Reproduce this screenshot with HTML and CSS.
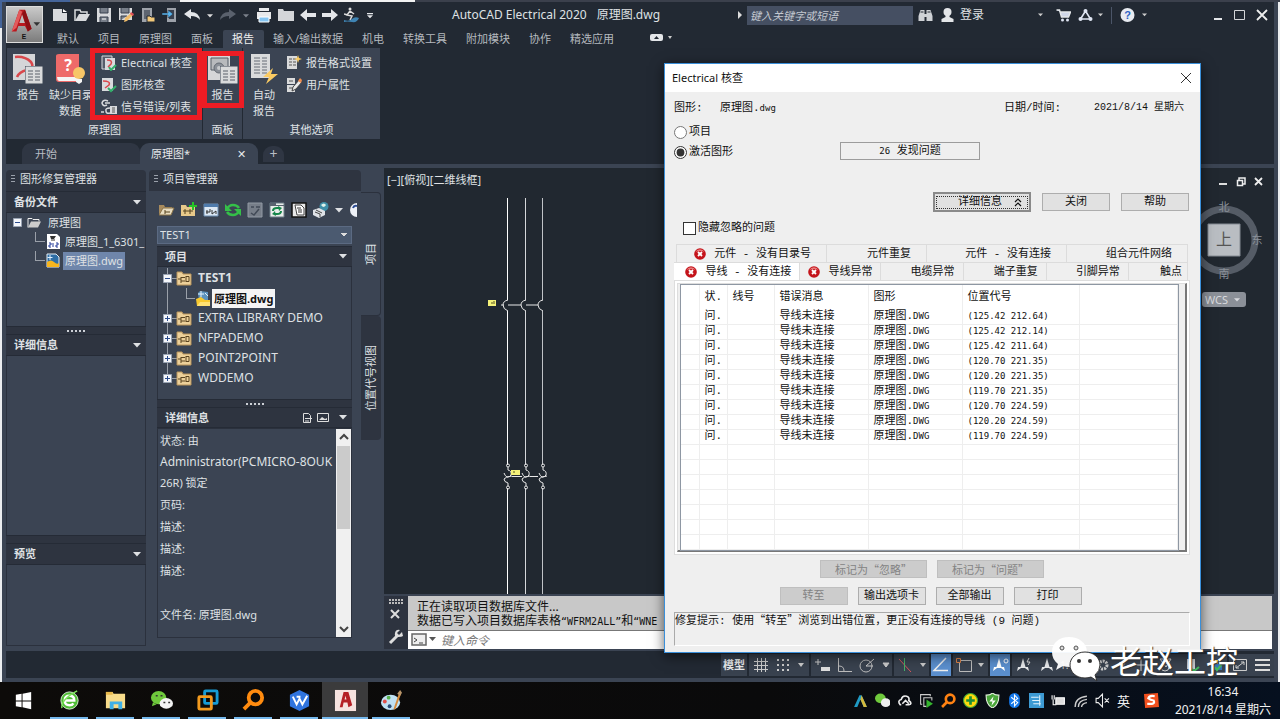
FILE: index.html
```html
<!DOCTYPE html>
<html lang="zh-CN">
<head>
<meta charset="utf-8">
<title>AutoCAD Electrical 2020 - 原理图.dwg</title>
<link rel="stylesheet" href="styles.css">
</head>
<body>
<svg class="defs" aria-hidden="true">
  <symbol id="folder" viewBox="0 0 16 15"><path d="M1 1h5l1 2h8v11H1z" fill="#ecd09a" stroke="#b8935a"/><path d="M2 8h3M5 6v6M5 6.500h4M5 10h4M10 5v6M10 5.500h3v5h-3" stroke="#5b4420" fill="none"/></symbol>
  <symbol id="plus" viewBox="0 0 9 9"><path d="M.5.5h8v8h-8z" fill="#f4f6fa" stroke="#9aa4b4"/><path d="M2 4.500h5M4.500 2v5" stroke="#2c4c8c"/></symbol>
  <symbol id="minus" viewBox="0 0 9 9"><path d="M.5.5h8v8h-8z" fill="#f4f6fa" stroke="#9aa4b4"/><path d="M2 4.500h5" stroke="#2c4c8c"/></symbol>
  <symbol id="dwg" viewBox="0 0 14 15"><path d="M1 1h9l3 3v10H1z" fill="#2e6ea6" stroke="#e5edf5"/><path d="M1 9q4-3 7 0t5 1v4H1z" fill="#f6b51e"/><path d="M4 2v5M1.500 4.500h5" stroke="#dff0ff"/></symbol>
  <symbol id="dwg2" viewBox="0 0 14 15"><path d="M2 2l2-2 8 1v9H3z" fill="#5d93bd"/><path d="M5 0v6M2 3h6M9 2l3 3" stroke="#e5f2fb"/><path d="M0 8l5-2 4 3h5v6H1z" fill="#f8c92e"/><path d="M1 15l3-4h10v4z" fill="#ffe173"/></symbol>
  <symbol id="caret" viewBox="0 0 8 5"><path d="M0 0h8L4 4.500z" fill="currentColor"/></symbol>
  <symbol id="err" viewBox="0 0 12 12"><circle cx="6" cy="6" r="5.800" fill="#c4131a"/><path d="M1.500 4a5 5 0 0 1 9 0q-4-2-9 0" fill="#e87a7a"/><path d="M4 4l4 4M8 4l-4 4" stroke="#fff" stroke-width="1.800"/></symbol>
  <symbol id="sheet" viewBox="0 0 30 32"><path d="M0 1h22v26H0z" fill="#d5d6d8"/></symbol>
  <symbol id="list" viewBox="0 0 18 18"><path d="M0 0h18v18H0z" fill="#dadbdc" stroke="#3b4453"/><path d="M3 5h5M10 5h5M3 8h5M10 8h5M3 11h5M10 11h5M3 14h5M10 14h5" stroke="#5a606a"/></symbol>
  <symbol id="person" viewBox="0 0 16 16"><path d="M8 1L5.500 10H3l-1 4 4-3h4l4 3-1-4h-2.500z" fill="currentColor"/></symbol>
</svg>

<div class="desktop">
<div class="app">
  <header class="header">
    <button class="logo" aria-label="应用程序菜单">
      <svg viewBox="0 0 37 37"><path d="M5 26L13 3h6l7 20-4 3-3-6h-7l-2 6z" fill="#b9191f"/><path d="M13 3l3 2-6 17-5 4z" fill="#e25a5c"/><path d="M16 8l3 9h-6z" fill="#bfbfbf"/><path d="M19 3l7 20-4 3-6-19z" fill="#8c1015"/><path d="M28 16h7l-3.500 4z" fill="#333"/><text x="18" y="34" class="logo-e">E</text></svg>
    </button>
    <div class="header-main">
      <div class="titlebar">
        <div class="quick">
          <svg class="q" viewBox="0 0 16 16"><path d="M1 2h9v4h5v8H1z" fill="#d8dadd"/><path d="M11 2l4 3h-4z" fill="#fff"/></svg>
          <svg class="q" viewBox="0 0 16 16"><path d="M1 14V3h5l1 2h6v2" fill="none" stroke="#d8dadd" stroke-width="1.500"/><path d="M1 14L5 7h11l-4 7z" fill="#d8dadd"/></svg>
          <svg class="q" viewBox="0 0 16 16"><path d="M1 1h14v14H1z" fill="#d8dadd"/><path d="M4 1v5h8V1M4 15v-5h8v5" fill="#777e89" stroke="#39414f"/><path d="M6 12h4" stroke="#fff"/></svg>
          <svg class="q" viewBox="0 0 16 16"><path d="M1 1h13v12H1z" fill="#d8dadd"/><path d="M3 1v5h8V1M3 13v-4h6" fill="#777e89" stroke="#39414f"/><path d="M6 15l1-4 6-5 2 2-6 6z" fill="#f1bd6a"/><path d="M12 7l1-2 3 2-1 2z" fill="#e0505a"/></svg>
          <svg class="q" viewBox="0 0 16 16"><path d="M2 1h10v14H2z" fill="#9da2aa"/><path d="M4 3h6v9H4z" fill="#5d6470"/><path d="M7 9h3l1 1h4v5H7z" fill="#f2c879" stroke="#222933"/></svg>
          <svg class="q" viewBox="0 0 16 16"><path d="M5 1h9v14H5z" fill="#9da2aa"/><path d="M7 3h5v9H7z" fill="#39414f"/><path d="M0 6h6V3l5 4-5 4V8H0z" fill="#58b4ee" stroke="#222933" stroke-width=".5"/></svg>
          <svg class="q" viewBox="0 0 16 16"><path d="M0 7l7-5v3q8 0 9 8-3-4-9-4v3z" fill="#e4e6e9"/></svg>
          <svg class="q-caret"><use href="#caret"/></svg>
          <svg class="q" viewBox="0 0 16 16"><path d="M16 7L9 2v3Q1 5 0 13q3-4 9-4v3z" fill="#5a616d"/></svg>
          <svg class="q-caret dim"><use href="#caret"/></svg>
          <svg class="q" viewBox="0 0 16 16"><path d="M3 1h10v3H3zM1 5h14v7H1z" fill="#e8e9eb"/><path d="M3 10h10v5H3z" fill="#86c5f2" stroke="#fff"/></svg>
          <svg class="q" viewBox="0 0 16 16"><path d="M0 2h5l1 2h10v10H0z" fill="#d4d6d9"/></svg>
          <svg class="q" viewBox="0 0 16 16"><path d="M0 8l7-6v4h9v4H7v4z" fill="#e4e6e9"/></svg>
          <svg class="q" viewBox="0 0 16 16"><path d="M16 8L9 2v4H0v4h9v4z" fill="#e4e6e9"/></svg>
          <svg class="q" viewBox="0 0 16 16"><circle cx="6" cy="2" r="1.500" fill="#ddd"/><path d="M6 4L3 8l5 1-2 4M6 4l4 3M0 7l4 1" stroke="#ddd" stroke-width="1.500" fill="none"/><path d="M0 13q5 2 8-1t7-1q-2 5-7 4t-8 0z" fill="#3f84b4"/></svg>
          <svg class="q-caret" viewBox="0 0 8 8"><path d="M0 0h8v1.500H0zM0 3h8L4 7z" fill="#e4e6e9"/></svg>
        </div>
        <h1 class="title">AutoCAD Electrical 2020<span class="title-file">原理图.dwg</span></h1>
        <div class="account">
          <svg class="tri-r" viewBox="0 0 4 8"><path d="M0 0l4 4-4 4z" fill="#ddd"/></svg>
          <input class="search" type="text" placeholder="键入关键字或短语" aria-label="搜索">
          <svg class="a14" viewBox="0 0 14 14"><path d="M2 2h4v11H0V8zM8 2h4l2 6v5H8zM6 6h2v3H6z" fill="#cfd2d6"/><path d="M2 4h3M9 4h3" stroke="#222933"/></svg>
          <svg class="a14 user-icon" viewBox="0 0 14 14"><circle cx="7" cy="4" r="4" fill="#e4e6e9"/><path d="M5 6h4v3l4 2v3H1v-3l4-2z" fill="#e4e6e9"/></svg>
          <a class="login" href="#">登录</a>
          <svg class="caret-s"><use href="#caret"/></svg>
          <svg class="a14 cart" viewBox="0 0 14 14"><path d="M0 2h3l2 7h7l2-5H4" fill="#cfd6e8" stroke="#e4e6e9" stroke-width="1.500"/><circle cx="6" cy="12" r="1.500" fill="#dfe5f3"/><circle cx="11" cy="12" r="1.500" fill="#dfe5f3"/></svg>
          <svg class="a14 cloud" viewBox="0 0 14 14"><path d="M7 3L2 11h10z" fill="none" stroke="#dfe5f3" stroke-width="1.600"/><circle cx="7" cy="3" r="2" fill="#dfe5f3"/><circle cx="2" cy="11" r="2" fill="#dfe5f3"/><circle cx="12" cy="11" r="2" fill="#dfe5f3"/></svg>
          <svg class="caret-s near"><use href="#caret"/></svg>
          <span class="sep"></span>
          <svg class="a14" viewBox="0 0 14 14"><circle cx="7" cy="7" r="7" fill="#e8ebf1"/><text x="7" y="11" class="help-q">?</text></svg>
          <svg class="caret-s help-caret"><use href="#caret"/></svg>
          <svg class="winbtns" viewBox="0 0 58 14"><path d="M0 11h8" stroke="#e4e6e9" stroke-width="2"/><path d="M20.500 2.500h10v9h-10z" fill="none" stroke="#d4d6d9"/><path d="M43 2l10 10M53 2L43 12" stroke="#eee" stroke-width="1.800"/></svg>
        </div>
      </div>
      <nav class="tabs">
        <button>默认</button><button>项目</button><button>原理图</button><button>面板</button><button class="on">报告</button><button>输入/输出数据</button><button>机电</button><button>转换工具</button><button>附加模块</button><button>协作</button><button>精选应用</button>
        <svg class="tabs-extra" viewBox="0 0 24 8"><rect width="13" height="7" rx="2" fill="#e4e6e9"/><path d="M4 5h5L6.500 2z" fill="#222933"/><path d="M18 2h4l-2 3z" fill="#ccc"/></svg>
      </nav>
    </div>
  </header>

  <section class="ribbon">
    <div class="rpanel rp1">
      <div class="rbody">
        <button class="big"><svg viewBox="0 0 30 32"><use href="#sheet"/><path d="M2 4q10-1 16 5 4 6-4 8-8 2-10 7" fill="none" stroke="#d9484c" stroke-width="2.500"/><use href="#list" x="12" y="13" width="18" height="18"/></svg>报告</button>
        <button class="big"><svg viewBox="0 0 30 32"><path d="M1 3q0-2 3-2h20v28H4q-3 0-3-3z" fill="#ee6a69"/><path d="M2 24h22v4H4q-2-1-2-4z" fill="#f5f5f5"/><text x="13" y="18" class="book-q">?</text><circle cx="24" cy="20" r="6" fill="#f7c667"/><path d="M21 26h6v3l-3 2-3-2z" fill="#f5f5f5"/></svg>缺少目录<br>数据</button>
        <div class="small-col">
          <button><svg viewBox="0 0 16 16"><path d="M1 1h10v13H1z" fill="#555d6a" stroke="#d8dadd"/><path d="M4 3h10v12H4z" fill="#d8dadd"/><path d="M6 5q6 0 4 4l-3 3" stroke="#d9484c" stroke-width="1.500" fill="none"/><path d="M8 12l2 3 5-5" stroke="#31b06a" stroke-width="2" fill="none"/></svg>Electrical 核查</button>
          <button><svg viewBox="0 0 16 16"><path d="M1 1h11v13H1z" fill="#d8dadd"/><path d="M2 4q8 0 6 4l-4 3" stroke="#d9484c" stroke-width="1.500" fill="none"/><path d="M7 11l3 3 5-5" stroke="#31b06a" stroke-width="2" fill="none"/></svg>图形核查</button>
          <button><svg viewBox="0 0 16 16"><path d="M7 2Q2 0 1 4q1 4 5 2M4 4h5M0 13h3M9 9q-5 0-4 3 0 3 4 2" fill="none" stroke="#d8dadd" stroke-width="1.500"/><path d="M9 7h7v8H9z" fill="#d8dadd"/><path d="M11 9h3M11 11h3M11 13h3" stroke="#555"/></svg>信号错误/列表</button>
        </div>
      </div>
      <div class="rtitle">原理图</div>
      <span class="mark m1"></span>
    </div>
    <div class="rpanel rp2">
      <div class="rbody"><button class="big"><svg viewBox="0 0 30 32"><use href="#sheet"/><path d="M3 5h17v12H3z" fill="#b8babd" stroke="#555c67"/><circle cx="11" cy="15" r="5" fill="#8b9098" stroke="#646a73"/><circle cx="11" cy="15" r="2" fill="#c8cacd"/><use href="#list" x="12" y="13" width="18" height="18"/></svg>报告</button></div>
      <div class="rtitle">面板</div>
      <span class="mark m2"></span>
    </div>
    <div class="rpanel rp3">
      <div class="rbody">
        <button class="big"><svg viewBox="0 0 30 32"><path d="M2 1h19v24H2z" fill="#dadbdc"/><path d="M5 5h6M13 5h5M5 8h6M13 8h5M5 11h6M13 11h5M5 14h6M13 14h5M5 17h6M13 17h5M5 20h6M13 20h5" stroke="#666c76"/><path d="M24 15L14 24h6l-3 7 12-10h-7z" fill="#fbcb62"/></svg>自动<br>报告</button>
        <div class="small-col">
          <button><svg viewBox="0 0 16 16"><path d="M1 1h10v13H1z" fill="#dadbdc"/><path d="M3 4h3M7 4h3M3 7h3M7 7h3M3 10h3M7 10h3" stroke="#555"/><path d="M12 0l1 3 3 1-3 1-1 3-1-3-3-1 3-1z" fill="#fbcb62"/></svg>报告格式设置</button>
          <button><svg viewBox="0 0 16 16"><path d="M1 1h8v6H1zM1 8h8v7H1z" fill="#dadbdc"/><path d="M3 4h4M3 11h4" stroke="#555"/><path d="M6 14l1-4 6-7 3 2-6 7z" fill="#e9e9e9" stroke="#444"/><path d="M12 4l2-3 2 2-1 3z" fill="#f08d50"/></svg>用户属性</button>
        </div>
      </div>
      <div class="rtitle">其他选项</div>
    </div>
  </section>

  <div class="doctabs">
    <button class="dt">开始</button>
    <button class="dt on">原理图*<span>✕</span></button>
    <button class="dt add" aria-label="新建">+</button>
  </div>

  <main class="work">
    <aside class="recovery">
      <h2 class="ptitle">图形修复管理器</h2>
      <div class="phead">备份文件<svg><use href="#caret"/></svg></div>
      <ul class="tree rtree">
        <li><svg class="tog"><use href="#minus"/></svg><svg class="ic" viewBox="0 0 14 14"><path d="M1 12V3h4l1 1h6v2" fill="none" stroke="#eee"/><path d="M1 12l3-6h10l-3 6z" fill="#ccc"/></svg><span>原理图</span></li>
        <li class="sub"><svg class="ic" viewBox="0 0 14 15"><path d="M1 0h10l3 3v12H1z" fill="#fff"/><path d="M4 2h6l-2 3H5z" fill="#333"/><path d="M5 6h4" stroke="#333"/><path d="M3 9h2v2H3v2h2M7 9v4M10 9h2v2h-2v2h2" stroke="#223a9a" fill="none"/></svg><span>原理图_1_6301_</span></li>
        <li class="sub"><svg class="ic"><use href="#dwg"/></svg><span class="sel">原理图.dwg</span></li>
      </ul>
      <div class="split dots"></div>
      <div class="phead">详细信息<svg><use href="#caret"/></svg></div>
      <div class="pfill"></div>
      <div class="split"></div>
      <div class="phead">预览<svg><use href="#caret"/></svg></div>
      <div class="pview"></div>
    </aside>

    <aside class="project">
      <h2 class="ptitle">项目管理器</h2>
      <div class="pbody">
        <div class="ptools">
          <svg viewBox="0 0 16 16"><path d="M0 13V3h5l1 2h7v3" fill="#a88b5d"/><path d="M0 13l4-7h11l-3 7z" fill="#e8dcc0" stroke="#8a7348"/><path d="M6 8v4M6 10h5" stroke="#54421f"/></svg>
          <svg viewBox="0 0 16 16"><path d="M0 3h5l1 2h8v9H0z" fill="#e8c98a"/><path d="M2 9h10M4 7v5M9 7v5" stroke="#54421f"/><path d="M12 0v8M8 4h8" stroke="#27c427" stroke-width="2"/></svg>
          <svg viewBox="0 0 16 16"><path d="M1 2h14v12H1z" fill="#dce8f4" stroke="#6f8fb3"/><path d="M1 2h14v3H1z" fill="#4f7bac"/><path d="M4 8v4M3 10h4V7M9 8v4l4-3v3" stroke="#333" fill="none"/></svg>
          <svg viewBox="0 0 16 16"><path d="M2 7q2-4 6-4 4 0 6 3M14 9q-2 4-6 4-4 0-6-3" stroke="#35bf49" stroke-width="2.500" fill="none"/><path d="M0 2v7h7zM16 14V7H9z" fill="#35bf49"/></svg>
          <svg viewBox="0 0 16 16"><path d="M1 1h14v14H1z" fill="#777e89" stroke="#9299a4"/><path d="M4 5h3M9 5h4M4 11l3 2 5-6" stroke="#424a57" stroke-width="1.500" fill="none"/></svg>
          <svg viewBox="0 0 16 16"><path d="M1 1h14v14H1z" fill="#e9eeea" stroke="#6c7c88"/><path d="M1 1h6v2h8v1H1z" fill="#58636f"/><path d="M4 9q0-3 4-3h2M12 9q0 3-4 3H6" stroke="#16864a" stroke-width="2" fill="none"/><path d="M9 4l4 2-3 3zM7 14l-4-2 3-3z" fill="#16864a"/></svg>
          <svg viewBox="0 0 16 16"><path d="M1 1h14v14H1z" fill="#e8e8e8" stroke="#111" stroke-width="1.500"/><path d="M4 3h6l3 3v7H6z" fill="#fff" stroke="#444"/><path d="M6 6h4M7 8h4M7 10h4" stroke="#333"/></svg>
          <svg viewBox="0 0 16 16"><circle cx="11" cy="4.500" r="4.500" fill="#3f8fa8"/><path d="M8 3q3-3 5 0-1 2-3 2z" fill="#dff2ea"/><path d="M0 8l6-2 6 3v4l-6 3-6-3z" fill="#dfe2e7"/><path d="M2 10l5 2v3M3 8l6 3" stroke="#444" fill="none"/></svg>
          <svg class="pc"><use href="#caret"/></svg>
          <svg class="half" viewBox="0 0 8 16"><circle cx="8" cy="8" r="7" fill="#eef1f7"/><path d="M4 6q1-3 4-2" stroke="#2d4d94" stroke-width="2" fill="none"/></svg>
        </div>
        <select class="combo" aria-label="当前项目"><option>TEST1</option></select>
        <div class="phead">项目<svg><use href="#caret"/></svg></div>
        <ul class="tree ptree">
          <li class="bold lat"><svg class="tog"><use href="#minus"/></svg><svg class="ic"><use href="#folder"/></svg><span>TEST1</span></li>
          <li class="sub bold"><svg class="ic"><use href="#dwg2"/></svg><span class="cur">原理图.dwg</span></li>
          <li class="lat"><svg class="tog"><use href="#plus"/></svg><svg class="ic"><use href="#folder"/></svg><span>EXTRA LIBRARY DEMO</span></li>
          <li class="lat"><svg class="tog"><use href="#plus"/></svg><svg class="ic"><use href="#folder"/></svg><span>NFPADEMO</span></li>
          <li class="lat"><svg class="tog"><use href="#plus"/></svg><svg class="ic"><use href="#folder"/></svg><span>POINT2POINT</span></li>
          <li class="lat"><svg class="tog"><use href="#plus"/></svg><svg class="ic"><use href="#folder"/></svg><span>WDDEMO</span></li>
        </ul>
        <div class="split dots"></div>
        <div class="phead">详细信息<svg class="two" viewBox="0 0 28 12"><path d="M1.500 1.500h5l2 2v7h-7zM3 6.500h7M3 9h4" fill="none" stroke="#ddd"/><path d="M15.500 1.500h11v8h-11z" fill="none" stroke="#ddd"/><path d="M17 8l3-3 3 2 2-1v2z" fill="#ddd"/></svg><svg><use href="#caret"/></svg></div>
        <div class="details">
          <div class="dtext"><p>状态: 由<br><span class="lat">Administrator(PCMICRO-8OUK</span><br>26R) 锁定</p><p>页码:</p><p>描述:</p><p>描述:</p><p>描述:</p><p>&nbsp;</p><p>文件名: 原理图.dwg</p></div>
          <div class="scroll"><svg viewBox="0 0 15 17"><path d="M4 10l4-4 4 4" fill="none" stroke="#444" stroke-width="2"/></svg><span></span><svg class="down" viewBox="0 0 15 17"><path d="M4 7l4 4 4-4" fill="none" stroke="#444" stroke-width="2"/></svg></div>
        </div>
      </div>
    </aside>
    <div class="vtabs"><button class="on">项目</button><button>位置代号视图</button></div>

    <section class="center">
      <div class="canvas">
        <span class="vp">[−][俯视][二维线框]</span>
        <svg class="draw" aria-label="三相回路">
          <g transform="translate(-384 -168)" fill="none" shape-rendering="crispEdges">
            <path d="M507.500 198v102M507.500 311v154M507.500 488v106" stroke="#fff"/>
            <path d="M525.500 198v102M525.500 311v154M525.500 488v106" stroke="#d5d7da"/>
            <path d="M542.500 198v102M542.500 311v154M542.500 488v106" stroke="#c0c3c7"/>
          </g>
          <g transform="translate(-384 -168)" fill="none" stroke="#e8e8e8">
            <path d="M508 300q-5 1-5 5t5 6M526 300q-5 1-5 5t5 6M543 300q-5 1-5 5t5 6M501 305h3M508 305h13M526 305h12"/>
            <g id="pole"><circle cx="508" cy="465.500" r="1.500"/><circle cx="508" cy="487.500" r="1.500"/><path d="M508 467v3q4 1 3 5-1 2-4 2-2-1-3-4M512 476q-7 1-8 3 0 3 4 4v3"/></g>
            <use href="#pole" x="18"/>
            <use href="#pole" x="35"/>
            <path d="M512 476.500h10M530 476.500h8"/>
            <path d="M488 300h8v6h-8zM511 470h9v5h-9z" fill="#f5f27a" stroke="none"/><path d="M491 303h2M494 301v3M513 472h2" stroke="#55531e"/>
          </g>
        </svg>
        <svg class="mdi" viewBox="0 0 46 12"><path d="M0 8h8" stroke="#ddd" stroke-width="2"/><path d="M18.500 4.500h5v5h-5zM20 4V2h6v6h-2" fill="none" stroke="#eee" stroke-width="1.500"/><path d="M36 2l7 7M43 2l-7 7" stroke="#eee" stroke-width="1.800"/></svg>
        <div class="cube"><svg viewBox="0 0 90 90"><circle cx="45" cy="41" r="31" fill="none" stroke="#555c66" stroke-width="7"/><path d="M29 25h32v32H29z" fill="#b9bdc2" stroke="#858b93"/><text x="45" y="46" class="cube-t">上</text><text x="45" y="12" class="dir">北</text><text x="78" y="45" class="dir">东</text><text x="45" y="79" class="dir">南</text></svg><button>WCS <svg><use href="#caret"/></svg></button></div>
      </div>
      <div class="cmd">
        <div class="cmd-side"><svg viewBox="0 0 16 48"><path d="M1 2h15M1 5h15" stroke="#bbb" stroke-width="2" stroke-dasharray="2 1"/><path d="M3 12l8 8M11 12l-8 8" stroke="#ddd" stroke-width="2"/><path d="M2 45l8-8" stroke="#ddd" stroke-width="3"/><path d="M14 34l-3 3-2-2 3-3q-4-1-5 3t3 4 5-1z" fill="#ddd"/></svg></div>
        <div class="cmd-main">
          <div class="hist">正在读取项目数据库文件...<br>数据已写入项目数据库表格<span>“WFRM2ALL”</span>和<span>“WNE</span></div>
          <label class="cmd-line"><svg viewBox="0 0 26 14"><path d="M1 1h14v11H1z" fill="#eee" stroke="#666" stroke-width="1.500"/><path d="M3 5l3 2-3 2M8 10h4" stroke="#444" fill="none"/><path d="M18 4h7l-3.500 4z" fill="#555"/></svg><input type="text" placeholder="键入命令" aria-label="命令"></label>
        </div>
      </div>
    </section>
  </main>

  <footer class="status">
    <button class="st">模型</button>
    <span class="st g1"><svg viewBox="0 0 56 16"><path d="M3 4.500h14M3 8.500h14M3 12.500h14M6.500 1v14M10.500 1v14M14.500 1v14" stroke="#ccc"/><path d="M26 3h12M26 8h12M26 13h12" stroke="#ccc" stroke-width="2" stroke-dasharray="2 3"/><path d="M47 6h6l-3 4z" fill="#ccc"/></svg></span>
    <span class="st g2"><svg viewBox="0 0 77 16"><path d="M2 5h6M5 2v6" stroke="#ccc"/><path d="M8 10h9v4H8z" fill="#ddd"/><path d="M25.500 1v13.500H39M26 9q5 0 5 5" stroke="#bbb" fill="none"/><circle cx="53" cy="9" r="6" fill="none" stroke="#bbb"/><path d="M53 9l8-7M53 9h7M70 6h6l-3 4z" fill="#ccc" stroke="#ccc"/></svg></span>
    <span class="st g3"><svg viewBox="0 0 31 16"><path d="M3 2l12 13" stroke="#d4585e"/><path d="M8.500 1v13" stroke="#45b06a"/><path d="M24 6h6l-3 4z" fill="#ccc"/></svg></span>
    <span class="st hot"><svg viewBox="0 0 20 16"><path d="M15 1L3 13.500h14" stroke="#eee" stroke-width="1.500" fill="none"/></svg></span>
    <span class="st g4"><svg viewBox="0 0 31 16"><path d="M4.500 3.500h12v11h-12z" fill="none" stroke="#bbb"/><path d="M1.500 1.500h4v4h-4z" fill="#3b4453" stroke="#e08448"/><path d="M23 6h6l-3 4z" fill="#ccc"/></svg></span>
    <span class="st hot"><svg viewBox="0 0 20 16"><use href="#person" x="1" y="0" width="16" height="16"/><circle cx="16" cy="4" r="2" fill="none" stroke="#fff"/></svg></span>
    <span class="st g5"><svg viewBox="0 0 73 16"><use href="#person" x="1" y="0" width="16" height="16"/><path d="M15 1l-2 4h3l-2 3" stroke="#ddd" fill="none"/><use href="#person" x="25" y="0" width="16" height="16"/><text x="46" y="12" class="ratio">1:1</text><path d="M65 6h6l-3 4z" fill="#ccc"/></svg></span>
    <span class="st g6"><svg viewBox="0 0 132 16"><circle cx="10" cy="8" r="4" fill="none" stroke="#ccc" stroke-width="3" stroke-dasharray="2 1"/><path d="M26 6h6l-3 4zM42 8h12M48 2v12" fill="#ccc" stroke="#ccc"/><circle cx="72" cy="10" r="4" fill="none" stroke="#ccc"/><path d="M67 2l6 8 5-8z" fill="none" stroke="#ccc"/><path d="M94 2h8v10h-8z" fill="#c5c8cc"/><path d="M99 12l2 2 5-4" stroke="#42b85e" stroke-width="2" fill="none"/><path d="M117 3h8v6h-8z" fill="#eab935"/><path d="M121 7h8v6h-8z" fill="#3472b5"/><path d="M122 10l2 3 5-6" stroke="#42b85e" stroke-width="2" fill="none"/></svg></span>
    <span class="st g7"><svg viewBox="0 0 41 16"><path d="M2.500 2.500h13v11h-13z" fill="none" stroke="#ccc"/><path d="M10 5h3v3M8 11H5V8M5 11l8-6" fill="none" stroke="#ccc"/><path d="M24 3h15M24 8h15M24 13h15" stroke="#ddd" stroke-width="2"/></svg></span>
  </footer>
</div>

<section class="dialog" role="dialog" aria-label="Electrical 核查">
  <div class="d-title">Electrical 核查<button aria-label="关闭"><svg viewBox="0 0 10 10"><path d="M0 0l10 10M10 0L0 10" stroke="#333"/></svg></button></div>
  <div class="d-body">
    <div class="d-info"><span class="k">图形:</span><span>原理图.<small>dwg</small></span><span class="date">日期/时间:</span><span class="dv">2021/8/14 星期六</span></div>
    <div class="d-scope">
      <div class="radios"><label><input type="radio" name="scope">项目</label><label><input type="radio" name="scope" checked>激活图形</label></div>
      <output class="found"><small>26</small> 发现问题</output>
    </div>
    <div class="d-actions"><button class="focus"><span>详细信息<svg viewBox="0 0 8 9"><path d="M1 4l3-3 3 3M1 8l3-3 3 3" fill="none" stroke="#111" stroke-width="1.200"/></svg></span></button><button>关闭</button><button>帮助</button></div>
    <label class="hide"><input type="checkbox">隐藏忽略的问题</label>
    <div class="dtabs r1"><button><svg><use href="#err"/></svg>元件 - 没有目录号</button><button>元件重复</button><button>元件 - 没有连接</button><button>组合元件网络</button></div>
    <div class="dtabs r2"><button class="on"><svg><use href="#err"/></svg>导线 - 没有连接</button><button class="e"><svg><use href="#err"/></svg>导线异常</button><button>电缆异常</button><button>端子重复</button><button>引脚异常</button><button>触点</button></div>
    <div class="pane"><div class="pane-in">
      <table>
        <colgroup><col class="c0"><col class="c1"><col class="c2"><col class="c3"><col class="c4"><col class="c5"><col></colgroup>
        <thead><tr><th></th><th>状.</th><th>线号</th><th>错误消息</th><th>图形</th><th>位置代号</th><th></th></tr></thead>
        <tbody>
          <tr><td></td><td>问.</td><td></td><td>导线未连接</td><td>原理图.<small>DWG</small></td><td>(125.42 212.64)</td><td></td></tr>
          <tr><td></td><td>问.</td><td></td><td>导线未连接</td><td>原理图.<small>DWG</small></td><td>(125.42 212.14)</td><td></td></tr>
          <tr><td></td><td>问.</td><td></td><td>导线未连接</td><td>原理图.<small>DWG</small></td><td>(125.42 211.64)</td><td></td></tr>
          <tr><td></td><td>问.</td><td></td><td>导线未连接</td><td>原理图.<small>DWG</small></td><td>(120.70 221.35)</td><td></td></tr>
          <tr><td></td><td>问.</td><td></td><td>导线未连接</td><td>原理图.<small>DWG</small></td><td>(120.20 221.35)</td><td></td></tr>
          <tr><td></td><td>问.</td><td></td><td>导线未连接</td><td>原理图.<small>DWG</small></td><td>(119.70 221.35)</td><td></td></tr>
          <tr><td></td><td>问.</td><td></td><td>导线未连接</td><td>原理图.<small>DWG</small></td><td>(120.70 224.59)</td><td></td></tr>
          <tr><td></td><td>问.</td><td></td><td>导线未连接</td><td>原理图.<small>DWG</small></td><td>(120.20 224.59)</td><td></td></tr>
          <tr><td></td><td>问.</td><td></td><td>导线未连接</td><td>原理图.<small>DWG</small></td><td>(119.70 224.59)</td><td></td></tr>
          <tr><td></td><td></td><td></td><td></td><td></td><td></td><td></td></tr>
          <tr><td></td><td></td><td></td><td></td><td></td><td></td><td></td></tr>
          <tr><td></td><td></td><td></td><td></td><td></td><td></td><td></td></tr>
          <tr><td></td><td></td><td></td><td></td><td></td><td></td><td></td></tr>
          <tr><td></td><td></td><td></td><td></td><td></td><td></td><td></td></tr>
          <tr><td></td><td></td><td></td><td></td><td></td><td></td><td></td></tr>
          <tr><td></td><td></td><td></td><td></td><td></td><td></td><td></td></tr>
        </tbody>
      </table>
    </div></div>
    <div class="d-btns b1"><button disabled>标记为“忽略”</button><button disabled>标记为“问题”</button></div>
    <div class="d-btns b2"><button disabled>转至</button><button>输出选项卡</button><button>全部输出</button><button>打印</button></div>
    <div class="hint">修复提示: 使用<span class="cjk">“</span>转至<span class="cjk">”</span>浏览到出错位置，更正没有连接的导线 (9 问题)</div>
  </div>
</section>

<div class="wm">
  <svg viewBox="0 0 52 46"><path d="M18 1C8 1 1 7 1 16c0 5 2 9 6 12l-2 6 7-4q3 1 7 1c10 0 17-6 17-15S28 1 18 1z" fill="#fff" opacity=".95"/><circle cx="11" cy="12" r="2" fill="#ddd" stroke="#555"/><circle cx="25" cy="12" r="2" fill="#ddd" stroke="#555"/><path d="M34 16c-9 0-15 6-15 13s6 13 15 13q3 0 6-1l6 4-2-6q5-4 5-10c0-7-6-13-15-13z" fill="#fff" stroke="#333"/><circle cx="28" cy="25" r="2" fill="#333"/><circle cx="39" cy="25" r="2" fill="#333"/></svg>
  <span>老赵工控</span>
</div>
</div>

<footer class="taskbar">
  <div class="apps">
    <button class="start" aria-label="开始"><svg viewBox="0 0 24 24"><path d="M4 6l6-1v7H4zM11 5l9-2v9h-9zM4 13h6v6l-6-1zM11 13h9v8l-9-2z" fill="#fff"/></svg></button>
    <button aria-label="浏览器"><svg viewBox="0 0 24 24"><circle cx="12" cy="12" r="9" fill="#4fbd35" stroke="#d8f0d0"/><path d="M7 12h10q0-5-5-5t-5 5 5 5q3 0 4-2" fill="none" stroke="#fff" stroke-width="2.500"/><path d="M4 20Q3 11 20 2" stroke="#7de35a" fill="none" stroke-width="1.500"/></svg></button>
    <button aria-label="文件资源管理器"><svg viewBox="0 0 24 24"><path d="M2 3h7l1 2h12v15H2z" fill="#f8dc8a"/><path d="M2 3h7v3H2z" fill="#e8b84a"/><path d="M6 21v-8h13v8h-4v-5h-5v5z" fill="#3fb0e6"/></svg></button>
    <button aria-label="微信"><svg viewBox="0 0 24 24"><ellipse cx="9" cy="9" rx="8" ry="7" fill="#6fc93c"/><path d="M3 14l-1 4 5-2z" fill="#6fc93c"/><ellipse cx="17" cy="15" rx="7" ry="5.500" fill="#f3f3f3"/><path d="M6 7h2M11 7h2M14 14h2M19 14h2" stroke="#333" stroke-width="1.500"/></svg></button>
    <button aria-label="虚拟机"><svg viewBox="0 0 24 24"><rect x="9" y="2" width="13" height="13" rx="1" fill="none" stroke="#169bd5" stroke-width="3"/><rect x="3" y="8" width="13" height="13" rx="1" fill="none" stroke="#f39a1e" stroke-width="3"/></svg></button>
    <button aria-label="搜索"><svg viewBox="0 0 24 24"><circle cx="14" cy="9" r="7" fill="none" stroke="#ff8b0f" stroke-width="4"/><path d="M9 14l-7 7" stroke="#ff8b0f" stroke-width="4"/></svg></button>
    <button aria-label="文档"><svg viewBox="0 0 24 24"><path d="M12 1l10 5v12l-10 5-10-5V6z" fill="#2f74df"/><path d="M5 8l4 8 3-6 3 6 5-9M9 8h4" stroke="#fff" fill="none" stroke-width="2"/></svg></button>
    <button class="on" aria-label="AutoCAD"><svg viewBox="0 0 24 24"><path d="M1 1h22v22H1z" fill="#f6e2df"/><path d="M6 19L10 3h5l4 14-4 2-1-5h-4l-1 5z" fill="#b52026"/><path d="M11 11l1-4 1 4z" fill="#f6e2df"/></svg></button>
    <button aria-label="画图"><svg viewBox="0 0 24 24"><ellipse cx="11" cy="14" rx="10" ry="8" fill="#bfe0f2"/><circle cx="5" cy="13" r="2" fill="#e2504a"/><circle cx="9" cy="9" r="2" fill="#57b14a"/><circle cx="10" cy="18" r="2" fill="#2b4b75"/><path d="M14 21L20 4l2 1-6 16z" fill="#d68a3a"/><path d="M18 5l3-4 2 3-2 3z" fill="#b8956a"/></svg></button>
  </div>
  <div class="tray">
    <svg viewBox="0 0 14 14"><path d="M1 13L6 2h2l5 11h-3L7 6l-3 7z" fill="#1f9ac4"/><path d="M8 2l5 11h-3L7 6z" fill="#d6b93c"/></svg>
    <svg viewBox="0 0 14 14"><ellipse cx="5" cy="5" rx="5" ry="4.500" fill="#6fc93c"/><ellipse cx="10" cy="9" rx="4.500" ry="4" fill="#eee"/></svg>
    <svg viewBox="0 0 14 14"><path d="M4 11H3q-3-4 1-5 1-4 5-3 3 1 2 4 4 3 0 4H8M5 10l3-3 3 3" fill="none" stroke="#eee" stroke-width="1.500"/></svg>
    <svg viewBox="0 0 14 14"><path d="M3 10.500H1.500v-9h9V3M7 12.500H4.500v-8H12V7" fill="none" stroke="#ccc"/><path d="M7 6l6 4-6 4z" fill="#35b52e"/></svg>
    <svg viewBox="0 0 14 14"><circle cx="8.500" cy="5.500" r="4" fill="none" stroke="#ff8212" stroke-width="2.500"/><path d="M6 8l-5 5" stroke="#ff8212" stroke-width="2.500"/></svg>
    <svg viewBox="0 0 14 14"><circle cx="7" cy="7" r="6.500" fill="#ffd90d" stroke="#39a43a"/><path d="M7 3v8M3 7h8" stroke="#1d8f36" stroke-width="2.500"/></svg>
    <svg viewBox="0 0 14 14"><path d="M1 2q4 0 6-2 2 2 6 2 0 9-6 12-6-3-6-12z" fill="#4aa63a" stroke="#e5f2df"/><path d="M8 3L4 8h3l-1 4 4-5H7z" fill="#fff"/></svg>
    <svg viewBox="0 0 14 14"><rect x="2" width="10" height="14" rx="5" fill="#1477e8"/><path d="M4 4l6 5-3 3V2l3 3-6 5" fill="none" stroke="#fff"/></svg>
    <svg viewBox="0 0 14 14"><path d="M0 0h14v14H0z" fill="#3d9bd4"/><path d="M2 4h7M3 7h7M4 10h7M10 2v10" stroke="#e2f4fd"/></svg>
    <svg viewBox="0 0 14 14"><path d="M4.500 4.500h8v6h-8z" fill="#ddd" stroke="#fff"/><path d="M1 2v4M3 2v4M2 6v5h3" stroke="#fff" fill="none"/></svg>
    <svg viewBox="0 0 14 14"><path d="M2 13q0-9 11-10M5 13q0-6 8-7M8 13q0-3 5-4" stroke="#ccc" fill="none" stroke-width="1.300"/></svg>
    <svg viewBox="0 0 14 14"><path d="M1 5h2l4-4v12L3 9H1zM9 5l4 4M13 5L9 9" fill="none" stroke="#eee"/></svg>
    <span class="ime">英</span>
    <svg class="sogou" viewBox="0 0 14 14"><path d="M0 1l13-1 1 13-13 1z" fill="#f2501e"/><path d="M10 3Q5 2 4 5q2 2 5 2 2 4-6 3" stroke="#fff" stroke-width="2" fill="none"/></svg>
    <div class="clock">16:34<br>2021/8/14 星期六</div>
  </div>
</footer>
</body>
</html>
```

FILE: styles.css
```css
* { box-sizing: border-box; }
html, body { height: 100%; }
body {
  margin: 0;
  display: flex;
  flex-direction: column;
  font: 11px/14px "Noto Sans", "Noto Sans CJK SC", sans-serif;
  color: #dfe1e4;
  background: #05070b;
  overflow: hidden;
}
button { font: inherit; color: inherit; background: none; border: 0; padding: 0; margin: 0; }
input, select { font: inherit; color: inherit; margin: 0; }
h1, h2, p, ul { margin: 0; padding: 0; font-size: inherit; font-weight: normal; list-style: none; }
svg { display: block; flex: none; }
a { color: inherit; text-decoration: none; }
.defs { position: absolute; width: 0; height: 0; }

.desktop {
  position: relative;
  flex: 1;
  min-height: 0;
  display: flex;
  padding: 2px 2px 0;
  background: linear-gradient(90deg, #44649a 70px, #60646d 70px 180px, #f2f2f2 180px 415px, #3b404c 415px) top / 100% 2px no-repeat, linear-gradient(#44649a, #44649a) 0 0 / 2px 28px no-repeat, #eceef0;
}
.app {
  flex: 1;
  min-width: 0;
  display: flex;
  flex-direction: column;
  padding: 0 4px 4px;
  background: #3b4453;
}

/* title bar and ribbon tabs */
.header { display: flex; background: #222933; height: 46px; flex: none; }
.logo { width: 37px; height: 37px; margin: 4px 5px 0 0; background: linear-gradient(#c9c9c9, #7c7c7c); border: 1px solid #ddd; flex: none; }
.logo svg { width: 35px; height: 35px; }
.logo-e { font: bold 7px "Liberation Sans", sans-serif; text-anchor: middle; fill: #111; }
.header-main { flex: 1; min-width: 0; }
.titlebar { display: flex; align-items: center; height: 26px; padding-left: 4px; }
.quick { display: flex; align-items: center; gap: 6px; }
.q { width: 16px; height: 16px; }
.q-caret { width: 8px; height: 8px; padding: 2px 1px 0; color: #ddd; }
.dim { color: #7c828c; }
.title { margin-left: 78px; font-size: 12px; white-space: nowrap; }
.title-file { margin-left: 10px; }
.account { display: flex; align-items: center; margin-left: auto; }
.tri-r { width: 4px; height: 8px; margin-right: 5px; }
.search { width: 166px; height: 19px; border: 0; background: #454f62; padding: 0 3px; margin-right: 5px; font-style: italic; }
.search::placeholder { color: #c3c8d0; opacity: 1; }
.a14 { width: 15px; height: 14px; }
.user-icon { margin: 0 5px 0 7px; }
.login { font-size: 12px; }
.caret-s { width: 5px; height: 4px; color: #ccc; margin-left: 54px; }
.caret-s.near { margin-left: 5px; }
.caret-s.help-caret { margin-left: 7px; }
.cart { margin-left: 13px; }
.cloud { margin-left: 7px; }
.sep { width: 1px; height: 17px; background: #4b5568; margin: 0 8px; }
.winbtns { width: 58px; height: 14px; margin: 0 2px 0 67px; }
.help-q { font: bold 11px "Liberation Sans", sans-serif; text-anchor: middle; fill: #2d62c4; }
.tabs { display: flex; align-items: flex-end; height: 20px; }
.tabs button { height: 18px; padding: 0 10px 0 9px; color: #b5b9bf; white-space: nowrap; }
.tabs .on { background: #3b4453; color: #f0f0f0; border-radius: 2px 2px 0 0; }
.tabs-extra { width: 24px; height: 8px; margin: 0 0 6px 26px; }

.ribbon { display: flex; gap: 1px; height: 91px; flex: none; background: #222933; padding-left: 1px; }
.rpanel { position: relative; display: flex; flex-direction: column; background: #3b4453; }
.rp1 { width: 195px; }
.rp2 { width: 39px; }
.rp3 { width: 137px; }
.rbody { flex: 1; display: flex; padding-top: 5px; }
.rtitle { text-align: center; height: 15px; line-height: 12px; }
.big { width: 42px; flex: none; display: block; align-self: flex-start; line-height: 16px; white-space: nowrap; }
.big svg { width: 30px; height: 32px; margin: 0 auto 2px; }
.rp2 .big { width: 39px; }
.small-col { display: flex; flex-direction: column; gap: 3px; padding-left: 10px; background: #3b4453; z-index: 1; }
.rp3 .small-col { padding-left: 1px; }
.small-col button { display: flex; align-items: center; gap: 4px; height: 19px; white-space: nowrap; }
.small-col svg { width: 16px; height: 16px; }
.book-q { font: bold 16px "Noto Sans", sans-serif; text-anchor: middle; fill: #fff; }
.mark { position: absolute; border: 5px solid #ed1c24; z-index: 2; }
.m1 { left: 83px; top: 0; width: 112px; height: 72px; }
.m2 { left: -1px; top: 3px; width: 42px; height: 57px; }

.doctabs { display: flex; align-items: flex-end; height: 25px; flex: none; background: #222933; padding-left: 16px; }
.dt { height: 21px; width: 118px; text-align: left; padding: 0 13px; background: #2f3643; color: #b9bdc4; border-radius: 9px 9px 0 0; }
.dt.on { display: flex; justify-content: space-between; align-items: center; padding: 0 12px 0 11px; background: #3b4453; color: #e6e8ea; }
.dt.add { width: 21px; height: 16px; margin: 0 0 2px 5px; padding: 0; text-align: center; line-height: 14px; font-size: 14px; }

/* palettes */
.work { flex: 1; min-height: 0; display: flex; padding-top: 4px; }
.recovery { width: 140px; display: flex; flex-direction: column; margin: 2px 3px 5px 0; flex: none; }
.project { width: 212px; display: flex; flex-direction: column; margin: 2px 0 5px; flex: none; }
.ptitle { height: 21px; line-height: 18px; padding-left: 14px; background: #2e3440; border-radius: 4px 4px 0 0; flex: none; white-space: nowrap; }
.ptitle::before { content: ""; float: left; width: 4px; height: 9px; margin: 5px 0 0 -9px; background: repeating-linear-gradient(#9aa0aa 0 1px, #2e3440 1px 3px); }
.phead { display: flex; align-items: center; height: 21px; padding: 0 5px 0 8px; background: #2e3440; border-top: 1px solid #252b36; border-bottom: 1px solid #252b36; font-weight: bold; flex: none; }
.phead svg { width: 8px; height: 5px; margin-left: auto; }
.phead .two { width: 28px; height: 12px; }
.phead .two + svg { margin-left: 9px; }
.recovery .phead { height: 22px; }
.split { height: 8px; background: #2e3440; border-top: 1px solid #252b36; flex: none; }
.split.dots { background: repeating-linear-gradient(90deg, #ccd0d6 0 2px, #2e3440 2px 4px) center / 18px 2px no-repeat, #2e3440; }
.lat { font-size: 12px; }
.tree li { display: flex; align-items: center; white-space: nowrap; }
.rtree { height: 113px; border: 1px solid #2b313d; border-width: 0 1px; overflow: hidden; }
.rtree li { height: 19px; gap: 5px; padding-left: 6px; }
.rtree .sub { padding-left: 39px; gap: 3px; background: linear-gradient(#9aa0a9, #9aa0a9) 28px 9px / 10px 1px no-repeat, linear-gradient(#9aa0a9, #9aa0a9) 28px 0 / 1px 10px no-repeat; }
.tog { width: 9px; height: 9px; }
.ic { width: 14px; height: 15px; }
.tree span { padding: 0 2px; line-height: 18px; }
.tree .sel { background: #6f86ab; }
.pfill { flex: 1; border: 1px solid #2b313d; border-width: 0 1px; }
.pview { height: 81px; border: 1px solid #2b313d; border-top: 0; }

.pbody { flex: 1; min-height: 0; display: flex; flex-direction: column; padding: 11px 9px 8px 8px; }
.ptools { display: flex; align-items: center; gap: 6px; height: 16px; margin: 0 -9px 8px 2px; flex: none; }
.ptools svg { width: 16px; height: 16px; }
.ptools .pc { width: 8px; height: 5px; }
.ptools .half { width: 8px; }
.combo { appearance: none; height: 18px; margin-bottom: 2px; padding: 0 2px; border: 1px solid #5b6a82; border-radius: 0; flex: none; background: linear-gradient(45deg, transparent 50%, #ddd 50%) right 7px center / 4px 4px no-repeat, linear-gradient(-45deg, transparent 50%, #ddd 50%) right 3px center / 4px 4px no-repeat, #4b5a70; line-height: 14px; }
.ptree { height: 132px; padding-top: 1px; border: 1px solid #2b313d; border-width: 0 1px; }
.ptree li { height: 20px; padding-left: 5px; gap: 4px; background: linear-gradient(#9aa0a9, #9aa0a9) 14px 10px / 5px 1px no-repeat, linear-gradient(#9aa0a9, #9aa0a9) 9px 0 / 1px 100% no-repeat; }
.ptree li:last-child { background-size: 5px 1px, 1px 50%; }
.ptree .ic { width: 16px; }
.ptree .sub { padding-left: 37px; gap: 1px; background: linear-gradient(#9aa0a9, #9aa0a9) 9px 0 / 1px 100% no-repeat, linear-gradient(#9aa0a9, #9aa0a9) 28px 10px / 9px 1px no-repeat, linear-gradient(#9aa0a9, #9aa0a9) 28px 0 / 1px 10px no-repeat; }
.bold { font-weight: bold; }
.tree .cur { background: #f5f5f5; color: #111; line-height: 19px; }
.details { flex: 1; min-height: 0; display: flex; border: 1px solid #2b313d; overflow: hidden; }
.dtext { flex: 1; min-width: 0; padding: 1px 0 0 2px; line-height: 21px; white-space: nowrap; }
.dtext p { margin-bottom: 1px; }
.scroll { width: 15px; display: flex; flex-direction: column; background: #f0f0f0; }
.scroll span { height: 83px; background: #cbcbcb; margin: 0 1px; }
.scroll .down { margin-top: auto; }
.vtabs { width: 20px; padding-top: 24px; margin-right: 3px; flex: none; }
.vtabs button { writing-mode: sideways-lr; width: 20px; height: 124px; background: #2e3440; border-radius: 0 4px 4px 0; display: flex; align-items: center; justify-content: center; }
.vtabs .on { background: #3b4453; border: 1px solid #2b313d; border-left: 0; }

/* drawing area */
.center { flex: 1; min-width: 0; display: flex; flex-direction: column; }
.canvas { position: relative; flex: 1; min-height: 0; background: #212830; overflow: hidden; }
.vp { position: absolute; left: 3px; top: 5px; }
.draw { position: absolute; inset: 0; width: 100%; height: 100%; }
.mdi { position: absolute; right: 9px; top: 8px; width: 46px; height: 12px; }
.cube { position: absolute; right: 5px; top: 31px; width: 90px; }
.cube > svg { width: 90px; height: 90px; }
.cube-t { font: 16px "Noto Sans CJK SC", sans-serif; fill: #555; text-anchor: middle; }
.dir { font: 11px "Noto Sans CJK SC", sans-serif; fill: #8b9199; text-anchor: middle; }
.cube button { display: flex; align-items: center; gap: 6px; margin: 3px 0 0 23px; width: 44px; height: 15px; padding-left: 3px; background: #8b9098; border-radius: 3px; color: #d8dade; }
.cube button svg { width: 6px; height: 4px; }

.cmd { display: flex; height: 57px; padding: 2px 2px 2px 0; background: #3b4453; flex: none; }
.cmd-side { width: 24px; background: #2d333f; padding: 2px 0 0 4px; }
.cmd-side svg { width: 16px; height: 48px; }
.cmd-main { flex: 1; min-width: 0; display: flex; flex-direction: column; color: #111; }
.hist { flex: 1; background: #c8c8c8; padding: 4px 9px; font-size: 12px; white-space: nowrap; border-bottom: 1px solid #777; overflow: hidden; }
.hist span { font: 10px/14px "DejaVu Sans Mono", monospace; }
.cmd-line { display: flex; align-items: center; height: 18px; background: #fff; padding-left: 3px; gap: 4px; }
.cmd-line svg { width: 26px; height: 14px; }
.cmd-line input { flex: 1; border: 0; background: none; font-style: italic; font-size: 12px; padding: 0; height: 16px; }
.cmd-line input::placeholder { color: #777; opacity: 1; }

.status { display: flex; gap: 2px; justify-content: flex-end; align-items: center; height: 27px; flex: none; background: #222933; color: #e6e8ea; }
.st { height: 22px; display: flex; align-items: center; background: #39424f; padding: 0 2px; font-weight: bold; white-space: nowrap; }
.st svg { height: 16px; }
.st.hot { background: #5b8fce; padding: 0; color: #fff; }
.hot svg { width: 20px; }
.g1 svg { width: 56px; }
.g2 svg { width: 77px; }
.g3 svg, .g4 svg { width: 31px; }
.g5 svg { width: 73px; }
.g6 svg { width: 132px; }
.g7 svg { width: 41px; }
.ratio { font: 10px "Noto Sans", sans-serif; fill: #ccc; }

/* dialog */
.dialog { position: absolute; left: 664px; top: 63px; width: 537px; border: 1px solid #3a8fd9; background: #efefef; color: #111; box-shadow: 0 3px 12px #0009; font-family: "Liberation Mono", "Noto Sans CJK SC", monospace; }
.d-title { display: flex; align-items: center; justify-content: space-between; height: 28px; padding: 0 9px 0 7px; background: #fff; font-family: "Noto Sans", "Noto Sans CJK SC", sans-serif; }
.d-title svg { width: 10px; height: 10px; }
.d-body { padding: 9px 10px 6px 9px; }
.d-info { display: flex; white-space: nowrap; }
.d-info .k { width: 46px; }
.date { margin-left: auto; width: 90px; }
.dv { font-size: 10px; margin-right: 6px; }
small { font: 9px/1 "DejaVu Sans Mono", monospace; }
.d-scope { display: flex; padding-top: 7px; }
.radios { width: 166px; }
.radios label { display: flex; align-items: center; gap: 2px; height: 20px; }
.radios input { width: 13px; height: 13px; accent-color: #333; }
.found { width: 140px; height: 18px; margin: 20px 0 -8px; border: 1px solid #9c9c9c; text-align: center; line-height: 16px; }
.d-actions { display: flex; justify-content: flex-end; gap: 11px; margin: 30px 1px 0 0; align-items: center; }
.d-actions button, .d-btns button { width: 68px; height: 18px; border: 1px solid #adadad; background: #e1e1e1; line-height: 14px; }
.d-actions .focus { width: 98px; height: 20px; border: 2px solid #8a8a8a; padding: 1px; }
.focus span { display: flex; align-items: center; justify-content: flex-end; gap: 12px; padding-right: 5px; height: 13px; border: 1px dotted #333; }
.focus svg { width: 8px; height: 9px; }
.hide { display: flex; align-items: center; gap: 2px; margin: 9px 0 9px 9px; height: 14px; }
.hide input { appearance: none; width: 13px; height: 13px; border: 1px solid #333; background: #fff; }
.dtabs { display: grid; height: 18px; margin: 0 2px; }
.dtabs button { display: flex; align-items: center; justify-content: flex-end; gap: 8px; padding-right: 15px; border: 1px solid #dcdcdc; border-width: 1px 1px 0 0; white-space: nowrap; }
.dtabs svg { width: 12px; height: 12px; }
.dtabs.r1 { grid-template-columns: 150fr 100fr 140fr 121fr; border-left: 1px solid #dcdcdc; }
.dtabs.r2 { grid-template-columns: 126fr 81fr 82fr 83fr 82fr 59fr; margin-left: 0; }
.dtabs.r2 button { padding-right: 8px; }
.dtabs .on { background: #fff; }
.dtabs.r2 button:last-child { padding-right: 5px; }
.pane { border: 1px solid #ddd; background: #fff; padding: 2px; }
.pane-in { background: #efefef; border: 1px solid #ddd; border-width: 1px 2px 2px 1px; border-right-color: #777; border-bottom-color: #777; padding: 1px 7px 0 3px; }
table { width: 100%; table-layout: fixed; border-collapse: collapse; background: #fff; outline: 1px solid #8e97a3; }
.c0 { width: 18px; } .c1 { width: 28px; } .c2 { width: 47px; } .c3 { width: 94px; } .c4 { width: 94px; } .c5 { width: 117px; }
th, td { padding: 0 0 0 5px; text-align: left; font-weight: normal; white-space: nowrap; border-right: 1px solid #eee; }
th { height: 24px; line-height: 22px; }
td { height: 15px; line-height: 13px; border-bottom: 1px solid #eee; }
td:nth-child(6) { font: 9px/13px "DejaVu Sans Mono", monospace; }
.d-btns { display: flex; justify-content: center; gap: 10px; }
.b1 { margin: 5px 0 9px; }
.b1 button { width: 107px; font-family: "Noto Sans CJK SC", sans-serif; }
.b2 { padding-right: 3px; }
.d-btns button:disabled { background: #ccc; border-color: #bfbfbf; color: #838383; }
.hint { margin-top: 7px; height: 34px; line-height: 13px; border: 1px solid #fff; border-top-color: #aaa; border-left-color: #aaa; white-space: nowrap; }
.cjk { font-family: "Noto Sans CJK SC", sans-serif; }

.wm { position: absolute; right: 42px; bottom: 0; display: flex; align-items: center; gap: 7px; color: #fff; font: 32px/42px "Noto Sans CJK SC", sans-serif; text-shadow: 1px 1px 1px #333; }
.wm svg { width: 52px; height: 46px; }

/* taskbar */
.taskbar { display: flex; justify-content: space-between; height: 37px; flex: none; background: linear-gradient(90deg, #0d0b09, #0a0a0b 60%, #06101f); }
.apps { display: flex; }
.apps button { width: 46px; display: flex; justify-content: center; align-items: center; background: linear-gradient(#76b9ed, #76b9ed) bottom / 38px 2px no-repeat; }
.apps .start { background: none; }
.apps .on { background: linear-gradient(#76b9ed, #76b9ed) bottom / 46px 2px no-repeat, #3b3b3c; }
.apps svg { width: 23px; height: 23px; }
.tray { display: flex; align-items: center; gap: 7px; color: #f2f2f2; }
.tray svg { width: 15px; height: 15px; }
.ime { font-size: 13px; width: 15px; }
.sogou { margin-left: 5px; }
.clock { text-align: center; font-size: 12px; line-height: 18px; white-space: nowrap; padding: 0 9px 0 9px; }
```
